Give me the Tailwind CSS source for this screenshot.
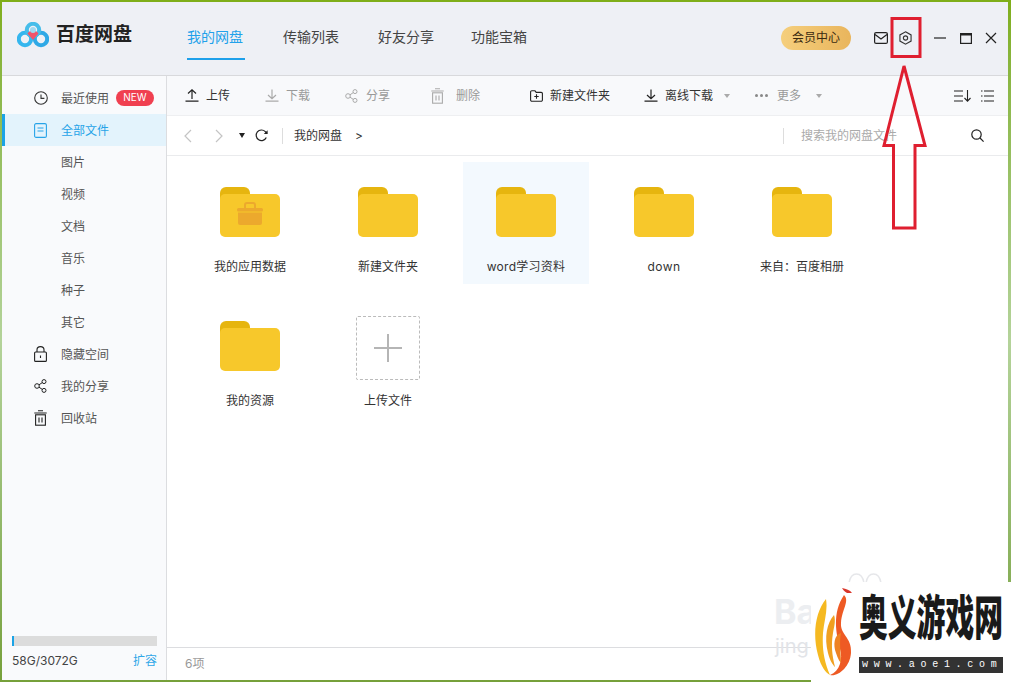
<!DOCTYPE html>
<html lang="zh">
<head>
<meta charset="utf-8">
<script src="https://cdn.jsdelivr.net/npm/@tailwindcss/browser@4"></script>
</head>
<body class="w-[1011px] h-[682px] overflow-hidden relative bg-linear-to-b from-[#7fae18] via-[#b4d39a] to-[#76a03a] font-['Inter','Noto_Sans_CJK_SC',sans-serif] text-xs text-[#333]">
<div class="absolute left-[2px] top-[2px] w-[1006px] h-[678px] bg-white flex flex-col">
  <!-- header -->
  <header class="h-[74px] shrink-0 bg-[#eef0f5] border-b border-[#d8d9dc] flex items-start relative">
    <svg class="mt-[20px] ml-[15px] w-[32px] h-[26px]" viewBox="0 0 32 26">
      <circle cx="8" cy="17" r="6.2" fill="none" stroke="#35b6ee" stroke-width="4"/>
      <circle cx="24" cy="17" r="6.2" fill="none" stroke="#2fa9e6" stroke-width="4"/>
      <circle cx="16" cy="8" r="6.200" fill="none" stroke="#45bdea" stroke-width="4"/>
      <path d="M10.500 11.500A6.500 6.500 0 0 1 21.500 11.500L16 18Z" fill="#f2526a"/>
      <circle cx="16" cy="8" r="3" fill="#9fd8f0"/>
    </svg>
    <div class="ml-[7px] mt-[19px] text-[19px] leading-[28px] font-semibold text-[#222] w-[80px] whitespace-nowrap">百度网盘</div>
    <nav class="ml-[51px] flex text-sm text-[#444]">
      <div class="w-[58px] h-[58px] pt-[23px] leading-[24px] whitespace-nowrap text-[#22a1ea] border-b-2 border-[#1ea0ea]">我的网盘</div>
      <div class="ml-[38px] pt-[23px] leading-[24px] whitespace-nowrap">传输列表</div>
      <div class="ml-[39px] pt-[23px] leading-[24px] whitespace-nowrap">好友分享</div>
      <div class="ml-[37px] pt-[23px] leading-[24px] whitespace-nowrap">功能宝箱</div>
    </nav>
    <div class="ml-auto flex items-center h-[24px] mt-[24px]">
      <div class="w-[70px] h-[24px] rounded-full bg-linear-to-r from-[#f5cf7d] to-[#e9b55c] flex items-center justify-center text-[#3a2a10]">会员中心</div>
      <svg class="ml-[23px] w-[14px] h-[12px]" viewBox="0 0 14 12" fill="none" stroke="#222" stroke-width="1.2"><rect x=".6" y=".6" width="12.8" height="10.8" rx="1.5"/><path d="M1 2.5 L7 7 L13 2.5"/></svg>
      <svg class="ml-[11px] w-[13px] h-[14px]" viewBox="0 0 14 15" fill="none" stroke="#333" stroke-width="1.2"><path d="M7 .8 L13 4.2 V10.8 L7 14.2 L1 10.8 V4.2Z"/><circle cx="7" cy="7.5" r="2.3"/></svg>
      <svg class="ml-[22px] w-[12px] h-[12px]" viewBox="0 0 12 12" stroke="#222" stroke-width="1.2"><path d="M0 6H12"/></svg>
      <svg class="ml-[14px] w-[12px] h-[11px]" viewBox="0 0 12 11" fill="none" stroke="#222" stroke-width="1.2"><rect x=".6" y=".6" width="10.8" height="9.8"/><path d="M0 1.500H12" stroke-width="2"/></svg>
      <svg class="ml-[13px] mr-[11px] w-[12px] h-[12px]" viewBox="0 0 12 12" stroke="#222" stroke-width="1.2"><path d="M1 1L11 11M11 1L1 11"/></svg>
    </div>
  </header>
  <div class="flex-1 flex min-h-0">
    <!-- sidebar -->
    <aside class="w-[165px] shrink-0 bg-[#f9fafc] border-r border-[#dcdde0] flex flex-col text-[#555] pt-[6px]">
      <div class="h-[32px] flex items-center pl-[32px]">
        <svg class="w-[14px] h-[14px]" viewBox="0 0 14 14" fill="none" stroke="#333" stroke-width="1.1"><circle cx="7" cy="7" r="6.3"/><path d="M7 3.500V7.400H10.400"/></svg>
        <span class="ml-[13px] mt-px whitespace-nowrap">最近使用</span>
        <span class="ml-[7px] w-[38px] h-[16px] rounded-full bg-[#f04050] text-white text-[10px] flex items-center justify-center">NEW</span>
      </div>
      <div class="h-[32px] flex items-center pl-[29px] bg-[#e3f3fc] border-l-[3px] border-[#1ba3e6] text-[#26a3e8]">
        <svg class="w-[13px] h-[15px]" viewBox="0 0 13 15" fill="none" stroke="#28a4e8" stroke-width="1.1"><rect x=".6" y=".6" width="11.8" height="13.800" rx="1.5"/><path d="M3.500 5H9.500M3.500 8H9.500"/></svg>
        <span class="ml-[14px] mt-px">全部文件</span>
      </div>
      <div class="h-[32px] flex items-center pl-[59px] pt-[2px]">图片</div>
      <div class="h-[32px] flex items-center pl-[59px] pt-[2px]">视频</div>
      <div class="h-[32px] flex items-center pl-[59px] pt-[2px]">文档</div>
      <div class="h-[32px] flex items-center pl-[59px] pt-[2px]">音乐</div>
      <div class="h-[32px] flex items-center pl-[59px] pt-[2px]">种子</div>
      <div class="h-[32px] flex items-center pl-[59px] pt-[2px]">其它</div>
      <div class="h-[32px] flex items-center pl-[32px]">
        <svg class="w-[13px] h-[16px]" viewBox="0 0 13 16" fill="none" stroke="#222" stroke-width="1.1"><rect x=".6" y="6" width="11.800" height="9.400" rx="1"/><path d="M3 6V3.800a3.500 3.200 0 0 1 7 0V6M6.500 9.500v2.500"/></svg>
        <span class="ml-[14px] mt-px">隐藏空间</span>
      </div>
      <div class="h-[32px] flex items-center pl-[32px]">
        <svg class="w-[13px] h-[14px]" viewBox="0 0 13 14" fill="none" stroke="#222" stroke-width="1"><circle cx="3" cy="7" r="2.300"/><circle cx="10" cy="2.600" r="2"/><circle cx="10" cy="11.400" r="2"/><path d="M5 5.800L8.300 3.600M5 8.200L8.300 10.400"/></svg>
        <span class="ml-[14px] mt-px">我的分享</span>
      </div>
      <div class="h-[32px] flex items-center pl-[32px]">
        <svg class="w-[13px] h-[16px]" viewBox="0 0 13 16" fill="none" stroke="#222" stroke-width="1.1"><path d="M4 .8H9M.3 3H12.700"/><rect x="1.600" y="4.800" width="9.800" height="10.400"/><path d="M5 7.500V12.500M8 7.500V12.500"/></svg>
        <span class="ml-[14px] mt-px">回收站</span>
      </div>
      <div class="mt-auto mx-[10px] mb-[5px]">
        <div class="w-[145px] h-[10px] bg-[#dcdcdc]"><div class="w-[2px] h-full bg-[#1ba3e6]"></div></div>
        <div class="flex justify-between items-center h-[29px] text-[#444]"><span>58G/3072G</span><span class="text-[#2fa7e8] mr-[-1px]">扩容</span></div>
      </div>
    </aside>
    <!-- main -->
    <main class="flex-1 flex flex-col min-w-0">
      <div class="h-[40px] shrink-0 bg-[#f8f9fb] border-b border-[#eeeff1] flex items-center relative pl-[18px] text-[#333]">
        <svg class="w-[14px] h-[13px]" viewBox="0 0 14 13" fill="none" stroke="#222" stroke-width="1.2"><path d="M7 10V1M3 4.500L7 .8L11 4.500M.5 12.200H13.500"/></svg>
        <span class="ml-[7px]">上传</span>
        <svg class="ml-[35px] w-[14px] h-[13px]" viewBox="0 0 14 13" fill="none" stroke="#aaa" stroke-width="1.2"><path d="M7 .5V9.500M3 6L7 9.700L11 6M.5 12.200H13.500"/></svg>
        <span class="ml-[7px] text-[#999]">下载</span>
        <svg class="ml-[35px] w-[13px] h-[14px]" viewBox="0 0 13 14" fill="none" stroke="#aaa" stroke-width="1"><circle cx="3" cy="7" r="2.300"/><circle cx="10" cy="2.600" r="2"/><circle cx="10" cy="11.400" r="2"/><path d="M5 5.800L8.300 3.600M5 8.200L8.300 10.400"/></svg>
        <span class="ml-[8px] text-[#999]">分享</span>
        <svg class="ml-[41px] w-[13px] h-[16px]" viewBox="0 0 13 16" fill="none" stroke="#aaa" stroke-width="1.1"><path d="M4 .8H9M.3 3H12.700"/><rect x="1.600" y="4.800" width="9.800" height="10.400"/><path d="M5 7.500V12.500M8 7.500V12.500"/></svg>
        <span class="ml-[12px] text-[#999]">删除</span>
        <svg class="ml-[50px] w-[13px] h-[12px]" viewBox="0 0 13 12" fill="none" stroke="#222" stroke-width="1.1"><path d="M.6 2a1.200 1.200 0 0 1 1.200-1.200H5L6.200 2.400H11.200A1.200 1.200 0 0 1 12.400 3.600V10A1.200 1.200 0 0 1 11.200 11.200H1.800A1.200 1.200 0 0 1 .6 10Z"/><path d="M4.300 6.500H8.700M6.500 4.300V8.700"/></svg>
        <span class="ml-[7px]">新建文件夹</span>
        <svg class="ml-[34px] w-[14px] h-[13px]" viewBox="0 0 14 13" fill="none" stroke="#222" stroke-width="1.2"><path d="M7 .5V9.500M3 6L7 9.700L11 6M.5 12.200H13.500"/></svg>
        <span class="ml-[7px] whitespace-nowrap">离线下载</span>
        <span class="ml-[11px] w-0 h-0 border-x-[3.500px] border-x-transparent border-t-[4px] border-t-[#aaa]"></span>
        <span class="ml-[25px] flex gap-[2px]"><i class="size-[3px] rounded-full bg-[#888]"></i><i class="size-[3px] rounded-full bg-[#888]"></i><i class="size-[3px] rounded-full bg-[#888]"></i></span>
        <span class="ml-[9px] text-[#999]">更多</span>
        <span class="ml-[15px] w-0 h-0 border-x-[3.500px] border-x-transparent border-t-[4px] border-t-[#aaa]"></span>
        <svg class="ml-auto w-[17px] h-[12px]" viewBox="0 0 17 12" fill="none" stroke="#222" stroke-width="1.1"><path d="M0 1H9M0 6H9M0 11H9M13.500 0V11M10.500 8L13.500 11.200L16.500 8"/></svg>
        <svg class="ml-[10px] mr-[14px] w-[13px] h-[12px]" viewBox="0 0 13 12" fill="none" stroke="#222" stroke-width="1.1"><path d="M3 1H13M3 6H13M3 11H13M0 1H1.500M0 6H1.500M0 11H1.500"/></svg>
      </div>
      <div class="h-[40px] shrink-0 border-b border-[#eaebed] flex items-center pl-[16px] relative">
        <svg class="w-[9px] h-[14px]" viewBox="0 0 9 14" fill="none" stroke="#c4c4c4" stroke-width="1.2"><path d="M8 1L2 7L8 13"/></svg>
        <svg class="ml-[23px] w-[9px] h-[14px]" viewBox="0 0 9 14" fill="none" stroke="#c4c4c4" stroke-width="1.2"><path d="M1 1L7 7L1 13"/></svg>
        <span class="ml-[15px] w-0 h-0 border-x-[3.500px] border-x-transparent border-t-[5px] border-t-[#222]"></span>
        <svg class="ml-[10px] w-[13px] h-[13px]" viewBox="0 0 13 13" fill="none" stroke="#222" stroke-width="1.2"><path d="M11.300 8.500A5.300 5.300 0 1 1 10.300 2.600L12 4.500"/><path d="M8.800 5H12.600V1.200" stroke="none" fill="#222"/></svg>
        <span class="ml-[14px] w-px h-[16px] bg-[#ddd]"></span>
        <span class="ml-[11px] whitespace-nowrap">我的网盘</span>
        <span class="ml-[13px]">&gt;</span>
        <span class="ml-auto w-px h-[16px] bg-[#ddd]"></span>
        <span class="ml-[17px] text-[#aaa] whitespace-nowrap">搜索我的网盘文件</span>
        <svg class="ml-[74px] mr-[24px] w-[13px] h-[13px]" viewBox="0 0 13 13" fill="none" stroke="#222" stroke-width="1.2"><circle cx="5.500" cy="5.500" r="4.700"/><path d="M9 9L12.600 12.600"/></svg>
      </div>
      <div class="flex-1 min-h-0 pl-[20px] pt-[6px] grid grid-cols-[repeat(5,126px)] auto-rows-[122px] gap-[12px] content-start">
        <div class="flex flex-col items-center pt-[25px]">
          <div class="relative w-[60px] h-[50px]">
            <div class="absolute left-0 top-0 w-[30px] h-[14px] rounded-t-[6px] bg-[#e6b50f]"></div>
            <div class="absolute left-0 top-[7px] w-[60px] h-[43px] rounded-[5px] bg-[#f7c82b]"></div>
            <svg class="absolute left-[17px] top-[15px] w-[26px] h-[24px]" viewBox="0 0 26 24" fill="#eca92d"><path d="M8 6V3a2 2 0 0 1 2-2h6a2 2 0 0 1 2 2v3" fill="none" stroke="#eca92d" stroke-width="2"/><rect x="0" y="6" width="26" height="3.500" rx="1.500"/><path d="M1 10.500H25V21a2 2 0 0 1-2 2H3a2 2 0 0 1-2-2Z"/></svg>
          </div>
          <div class="mt-[21px] leading-[18px]">我的应用数据</div>
        </div>
        <div class="flex flex-col items-center pt-[25px]">
          <div class="relative w-[60px] h-[50px]">
            <div class="absolute left-0 top-0 w-[30px] h-[14px] rounded-t-[6px] bg-[#e6b50f]"></div>
            <div class="absolute left-0 top-[7px] w-[60px] h-[43px] rounded-[5px] bg-[#f7c82b]"></div>
          </div>
          <div class="mt-[21px] leading-[18px]">新建文件夹</div>
        </div>
        <div class="flex flex-col items-center pt-[25px] bg-[#f3f9fe]">
          <div class="relative w-[60px] h-[50px]">
            <div class="absolute left-0 top-0 w-[30px] h-[14px] rounded-t-[6px] bg-[#e6b50f]"></div>
            <div class="absolute left-0 top-[7px] w-[60px] h-[43px] rounded-[5px] bg-[#f7c82b]"></div>
          </div>
          <div class="mt-[21px] leading-[18px] tracking-[.25px]">word学习资料</div>
        </div>
        <div class="flex flex-col items-center pt-[25px]">
          <div class="relative w-[60px] h-[50px]">
            <div class="absolute left-0 top-0 w-[30px] h-[14px] rounded-t-[6px] bg-[#e6b50f]"></div>
            <div class="absolute left-0 top-[7px] w-[60px] h-[43px] rounded-[5px] bg-[#f7c82b]"></div>
          </div>
          <div class="mt-[21px] leading-[18px] tracking-[.4px]">down</div>
        </div>
        <div class="flex flex-col items-center pt-[25px]">
          <div class="relative w-[60px] h-[50px]">
            <div class="absolute left-0 top-0 w-[30px] h-[14px] rounded-t-[6px] bg-[#e6b50f]"></div>
            <div class="absolute left-0 top-[7px] w-[60px] h-[43px] rounded-[5px] bg-[#f7c82b]"></div>
          </div>
          <div class="mt-[21px] leading-[18px]">来自：百度相册</div>
        </div>
        <div class="flex flex-col items-center pt-[25px]">
          <div class="relative w-[60px] h-[50px]">
            <div class="absolute left-0 top-0 w-[30px] h-[14px] rounded-t-[6px] bg-[#e6b50f]"></div>
            <div class="absolute left-0 top-[7px] w-[60px] h-[43px] rounded-[5px] bg-[#f7c82b]"></div>
          </div>
          <div class="mt-[21px] leading-[18px]">我的资源</div>
        </div>
        <div class="flex flex-col items-center pt-[20px]">
          <div class="w-[64px] h-[64px] border border-dashed border-[#bbb] rounded-[2px] flex items-center justify-center">
            <svg class="w-[28px] h-[28px]" viewBox="0 0 28 28" stroke="#b5b5b5" stroke-width="2"><path d="M14 0V28M0 14H28"/></svg>
          </div>
          <div class="mt-[12px] leading-[18px]">上传文件</div>
        </div>
      </div>
      <div class="h-[33px] shrink-0 border-t border-[#dcdde0] flex items-center pl-[18px] text-[#999]">6项</div>
    </main>
  </div>
</div>
<!-- annotation -->
<svg class="absolute left-0 top-0 w-[1011px] h-[682px] pointer-events-none" viewBox="0 0 1011 682" fill="none" stroke="#df1f30" stroke-width="3">
  <rect x="892" y="18.500" width="28" height="38"/>
  <path d="M904 66L884 145.500H893.500V228H915V145.500H925Z"/>
</svg>
<!-- baidu faint watermark -->
<div class="absolute left-[774px] top-[594px] text-[34px] leading-[36px] font-bold text-[#eceef1]">Ba</div>
<div class="absolute left-[775px] top-[634px] text-[20px] leading-[24px] text-[#e2e4e8]">jing</div>
<svg class="absolute left-[848px] top-[572px] w-[34px] h-[12px]" viewBox="0 0 34 12" fill="none" stroke="#e6e7ea" stroke-width="1.5"><path d="M1 11C3 -1 14 -1 16 11M18 11C20 -1 31 -1 33 11"/></svg>
<!-- site watermark -->
<div class="absolute left-[811px] top-[582px] w-[200px] h-[100px] bg-white flex items-start">
  <svg class="mt-[5px] ml-[3px] w-[40px] h-[90px]" viewBox="0 0 40 90">
    <path d="M33 6C30 4 29 3 28 1C32 2 36 3 38 6Z" fill="#d9352a"/>
    <path d="M30 8C36 14 28 22 27 36C26 48 38 50 37 66C36 80 24 90 16 88C26 84 29 72 26 62C22 46 18 26 30 8Z" fill="#ee5a24"/>
    <path d="M12 12C2 24 -2 46 4 68C7 80 12 86 16 88C10 74 8 62 9 46C10 34 14 24 12 12Z" fill="#f5b921"/>
    <path d="M20 28C13 36 10 50 14 66C16 74 19 78 21 80C18 68 17 58 19 46C20 40 22 34 20 28Z" fill="#f0a020"/>
    <path d="M27 46C20 48 19 58 22 66C24 72 26 75 27 76C27 66 25 56 27 46Z" fill="#ee8222"/>
  </svg>
  <div class="ml-[5px] mt-[8px] w-[144px]">
    <div class="text-[28.800px] leading-[34px] h-[56px] font-black text-[#1a1a1a] whitespace-nowrap origin-top scale-y-[1.65]">奥义游戏网</div>
    <div class="mt-[11px] h-[16px] bg-[#333] text-white text-[10px] leading-[16px] font-['Liberation_Mono',monospace] tracking-[5.700px] pl-[3px] whitespace-nowrap">www.aoe1.com</div>
  </div>
</div>
</body>
</html>
